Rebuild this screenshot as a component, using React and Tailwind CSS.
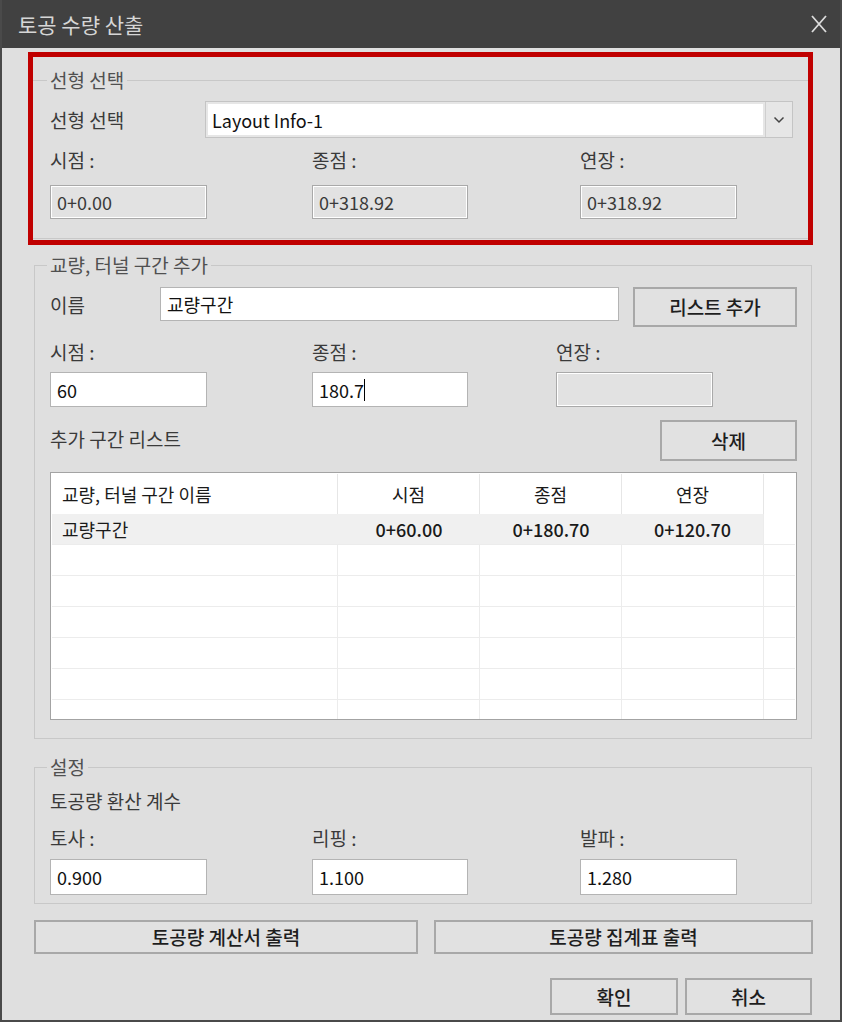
import React from 'react';

// 입력 박스 (흰색 / 읽기전용)
const Field = ({ value, w = 'w-[157px]', h = 'h-[34px]', readOnly = false, caret = false }) => (
  <div
    className={`${w} ${h} flex items-center pl-[6px] text-[18px] leading-[20px] border ${
      readOnly
        ? 'bg-[#e2e2e2] border-[#a9a9a9] shadow-[inset_1px_1px_0_#ffffff,inset_-1px_-1px_0_#ffffff] text-[#3a3a3a]'
        : 'bg-white border-[#b4b4b4] text-[#111]'
    }`}
  >
    {value}
    {caret && <span className="inline-block w-px h-[22px] bg-black" />}
  </div>
);

const Btn = ({ children, className = '' }) => (
  <button
    type="button"
    className={`flex items-center justify-center bg-[#e1e1e1] border-2 border-[#a8a8a8] text-[19px] leading-[20px] text-[#1e1e1e] font-medium ${className}`}
  >
    {children}
  </button>
);

const Group = ({ title, className = '', legendClass = 'ml-[12px]', children }) => (
  <fieldset className={`border-[#c8c8c8] p-0 m-0 min-w-0 ${className}`}>
    <legend className={`${legendClass} px-[3px] text-[19px] leading-[20px] text-[#505050]`}>{title}</legend>
    {children}
  </fieldset>
);

const Label = ({ children, className = '' }) => (
  <div className={`h-[20px] text-[19px] leading-[20px] text-[#3a3a3a] ${className}`}>{children}</div>
);

const cols = ['w-[286px]', 'w-[142px]', 'w-[142px]', 'w-[142px]'];

const App = () => {
  const emptyRows = [0, 1, 2, 3, 4, 5];

  return (
    <div className="w-[842px] h-[1022px] bg-[#dfdfdf] border-x-2 border-b-2 border-[#4a4a4a] overflow-hidden font-['Noto_Sans_CJK_KR','Noto_Sans',sans-serif]">
      {/* 타이틀 바 */}
      <div className="h-[48px] bg-[#414141] flex items-center justify-between pl-[16px] pr-[12px]">
        <span className="text-[21px] leading-[24px] text-[#d6d6d6]">토공 수량 산출</span>
        <svg width="18" height="20" viewBox="0 0 18 20" className="text-[#dcdcdc]">
          <path d="M2 2 L16 18 M16 2 L2 18" stroke="currentColor" strokeWidth="1.8" fill="none" />
        </svg>
      </div>

      {/* 선형 선택 (빨간 강조) */}
      <div className="mt-[4px] ml-[26px] w-[785px] h-[193px] border-[5px] border-[#c00000]">
        <Group title="선형 선택" className="mt-[13px] h-[169px] border-y border-x-0" legendClass="ml-[14px]">
          <div className="pl-[17px] pt-[11px]">
            <div className="flex items-center">
              <Label className="w-[155px]">선형 선택</Label>
              <div className="w-[588px] h-[37px] flex border border-[#c4c4c4] bg-[#e6e6e6]">
                <div className="flex-1 m-[2px] bg-white flex items-center pl-[4px] text-[18px] leading-[20px] text-[#111]">
                  Layout Info-1
                </div>
                <div className="w-[27px] flex items-center justify-center border-l border-[#cfcfcf]">
                  <svg width="12" height="8" viewBox="0 0 12 8">
                    <path d="M1.5 1.5 L6 6 L10.5 1.5" stroke="#444" strokeWidth="1.5" fill="none" />
                  </svg>
                </div>
              </div>
            </div>
            <div className="flex mt-[12px]">
              <Label className="w-[262px]">시점 :</Label>
              <Label className="w-[268px]">종점 :</Label>
              <Label>연장 :</Label>
            </div>
            <div className="flex mt-[15px]">
              <div className="w-[262px]"><Field value="0+0.00" readOnly /></div>
              <div className="w-[268px]"><Field value="0+318.92" w="w-[156px]" readOnly /></div>
              <Field value="0+318.92" readOnly />
            </div>
          </div>
        </Group>
      </div>

      {/* 교량, 터널 구간 추가 */}
      <Group title="교량, 터널 구간 추가" className="mt-[10px] ml-[32px] w-[778px] h-[484px] border">
        <div className="pl-[15px] pt-[12px]">
          <div className="flex items-start">
            <Label className="w-[110px] mt-[8px]">이름</Label>
            <Field value="교량구간" w="w-[459px]" />
            <Btn className="ml-[14px] w-[164px] h-[40px]">리스트 추가</Btn>
          </div>
          <div className="flex mt-[15px]">
            <Label className="w-[262px]">시점 :</Label>
            <Label className="w-[244px]">종점 :</Label>
            <Label>연장 :</Label>
          </div>
          <div className="flex mt-[10px]">
            <div className="w-[262px]"><Field value="60" h="h-[35px]" /></div>
            <div className="w-[244px]"><Field value="180.7" w="w-[156px]" h="h-[35px]" caret /></div>
            <Field value="" h="h-[35px]" readOnly />
          </div>
          <div className="w-[747px] flex justify-between items-start mt-[13px]">
            <Label className="mt-[9px]">추가 구간 리스트</Label>
            <Btn className="w-[137px] h-[41px]">삭제</Btn>
          </div>

          {/* 리스트 */}
          <div className="mt-[11px] w-[747px] h-[248px] border border-[#a3a3a3] bg-white p-[1px] overflow-hidden text-[18px] leading-[20px] text-[#1a1a1a]">
            <div className="flex h-[40px]">
              <div className={`${cols[0]} pl-[10px] flex items-center border-r border-[#e6e6e6]`}>교량, 터널 구간 이름</div>
              <div className={`${cols[1]} flex items-center justify-center border-r border-[#e6e6e6]`}>시점</div>
              <div className={`${cols[2]} flex items-center justify-center border-r border-[#e6e6e6]`}>종점</div>
              <div className={`${cols[3]} flex items-center justify-center border-r border-[#e6e6e6]`}>연장</div>
              <div className="flex-1" />
            </div>
            <div className="flex h-[31px] border-b border-[#ececec]">
              <div className={`${cols[0]} pl-[10px] flex items-center bg-[#f0f0f0]`}>교량구간</div>
              <div className={`${cols[1]} flex items-center justify-center bg-[#f0f0f0] font-medium`}>0+60.00</div>
              <div className={`${cols[2]} flex items-center justify-center bg-[#f0f0f0] font-medium`}>0+180.70</div>
              <div className={`${cols[3]} flex items-center justify-center bg-[#f0f0f0] font-medium border-r border-[#ececec]`}>0+120.70</div>
              <div className="flex-1" />
            </div>
            {emptyRows.map((r) => (
              <div key={r} className="flex h-[31px] border-b border-[#ececec]">
                <div className={`${cols[0]} border-r border-[#ececec]`} />
                <div className={`${cols[1]} border-r border-[#ececec]`} />
                <div className={`${cols[2]} border-r border-[#ececec]`} />
                <div className={`${cols[3]} border-r border-[#ececec]`} />
                <div className="flex-1" />
              </div>
            ))}
          </div>
        </div>
      </Group>

      {/* 설정 */}
      <Group title="설정" className="mt-[18px] ml-[32px] w-[778px] h-[147px] border">
        <div className="pl-[15px] pt-[14px]">
          <Label>토공량 환산 계수</Label>
          <div className="flex mt-[17px]">
            <Label className="w-[262px]">토사 :</Label>
            <Label className="w-[268px]">리핑 :</Label>
            <Label>발파 :</Label>
          </div>
          <div className="flex mt-[11px]">
            <div className="w-[262px]"><Field value="0.900" h="h-[36px]" /></div>
            <div className="w-[268px]"><Field value="1.100" w="w-[156px]" h="h-[36px]" /></div>
            <Field value="1.280" h="h-[36px]" />
          </div>
        </div>
      </Group>

      {/* 출력 버튼 */}
      <div className="flex gap-[16px] mt-[16px] ml-[32px]">
        <Btn className="w-[384px] h-[34px]">토공량 계산서 출력</Btn>
        <Btn className="w-[379px] h-[34px]">토공량 집계표 출력</Btn>
      </div>

      {/* 확인 / 취소 */}
      <div className="flex justify-end gap-[7px] mt-[24px] pr-[28px]">
        <Btn className="w-[128px] h-[37px]">확인</Btn>
        <Btn className="w-[127px] h-[37px]">취소</Btn>
      </div>
    </div>
  );
};

export default App;
